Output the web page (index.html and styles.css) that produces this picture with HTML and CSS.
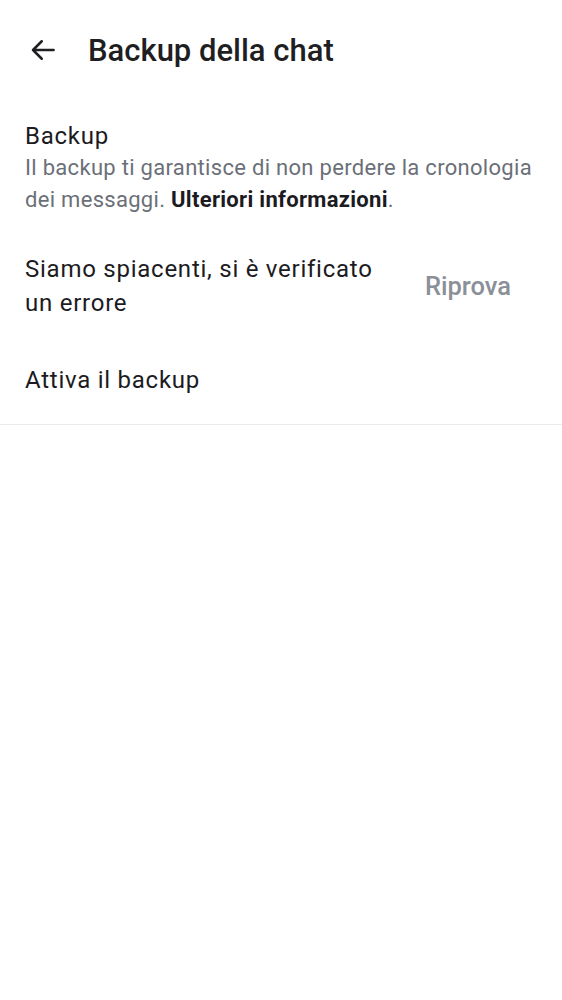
FILE: index.html
```html
<!DOCTYPE html>
<html lang="it">
<head>
<meta charset="utf-8">
<link rel="stylesheet" href="styles.css">
</head>
<body>
<header class="topbar">
  <button class="back" aria-label="Indietro">
    <svg width="30" height="30" viewBox="0 0 24 24"><path d="M20.5 12H4M11 5l-7 7 7 7" fill="none" stroke="#1f1f23" stroke-width="2" stroke-linecap="round" stroke-linejoin="round"/></svg>
  </button>
  <h1 class="title">Backup della chat</h1>
</header>
<section class="list">
  <div class="item intro">
    <div class="item-title">Backup</div>
    <div class="item-sub">Il backup ti garantisce di non perdere la cronologia dei messaggi. <b>Ulteriori informazioni</b>.</div>
  </div>
  <div class="item error">
    <div class="error-text">Siamo spiacenti, si è verificato un errore</div>
    <div class="retry">Riprova</div>
  </div>
  <div class="item enable">Attiva il backup</div>
</section>
</body>
</html>
```
FILE: styles.css
```css
* { box-sizing: border-box; }
body {
  margin: 0;
  background: #fff;
  font-family: Roboto, "Noto Sans", sans-serif;
  color: #1c1b1f;
}
.topbar {
  display: flex;
  align-items: center;
  height: 100px;
  padding-left: 28px;
}
.back {
  border: 0;
  background: none;
  padding: 0;
  width: 30px;
  height: 30px;
  display: flex;
  margin-right: 30px;
}
.title {
  margin: 0;
  font-size: 31px;
  font-weight: 500;
  color: #1f1f23;
}
.list {
  border-bottom: 1px solid #ebebed;
}
.item {
  padding: 0 25px;
}
.intro {
  padding-top: 20px;
}
.item-title {
  font-size: 24px;
  line-height: 32px;
  letter-spacing: 0.75px;
}
.item-sub {
  font-size: 22px;
  line-height: 32px;
  color: #6b6f78;
  letter-spacing: 0.3px;
}
.item-sub b {
  color: #1c1b1f;
  font-weight: 700;
}
.error {
  display: flex;
  align-items: center;
  justify-content: space-between;
  padding-top: 36px;
  padding-right: 51px;
}
.error-text {
  font-size: 24px;
  line-height: 34px;
  letter-spacing: 0.75px;
  width: 362px;
}
.retry {
  font-size: 25.5px;
  font-weight: 500;
  color: #8a8f98;
}
.enable {
  font-size: 24px;
  line-height: 32px;
  letter-spacing: 0.75px;
  padding-top: 44px;
  padding-bottom: 28px;
}
```
